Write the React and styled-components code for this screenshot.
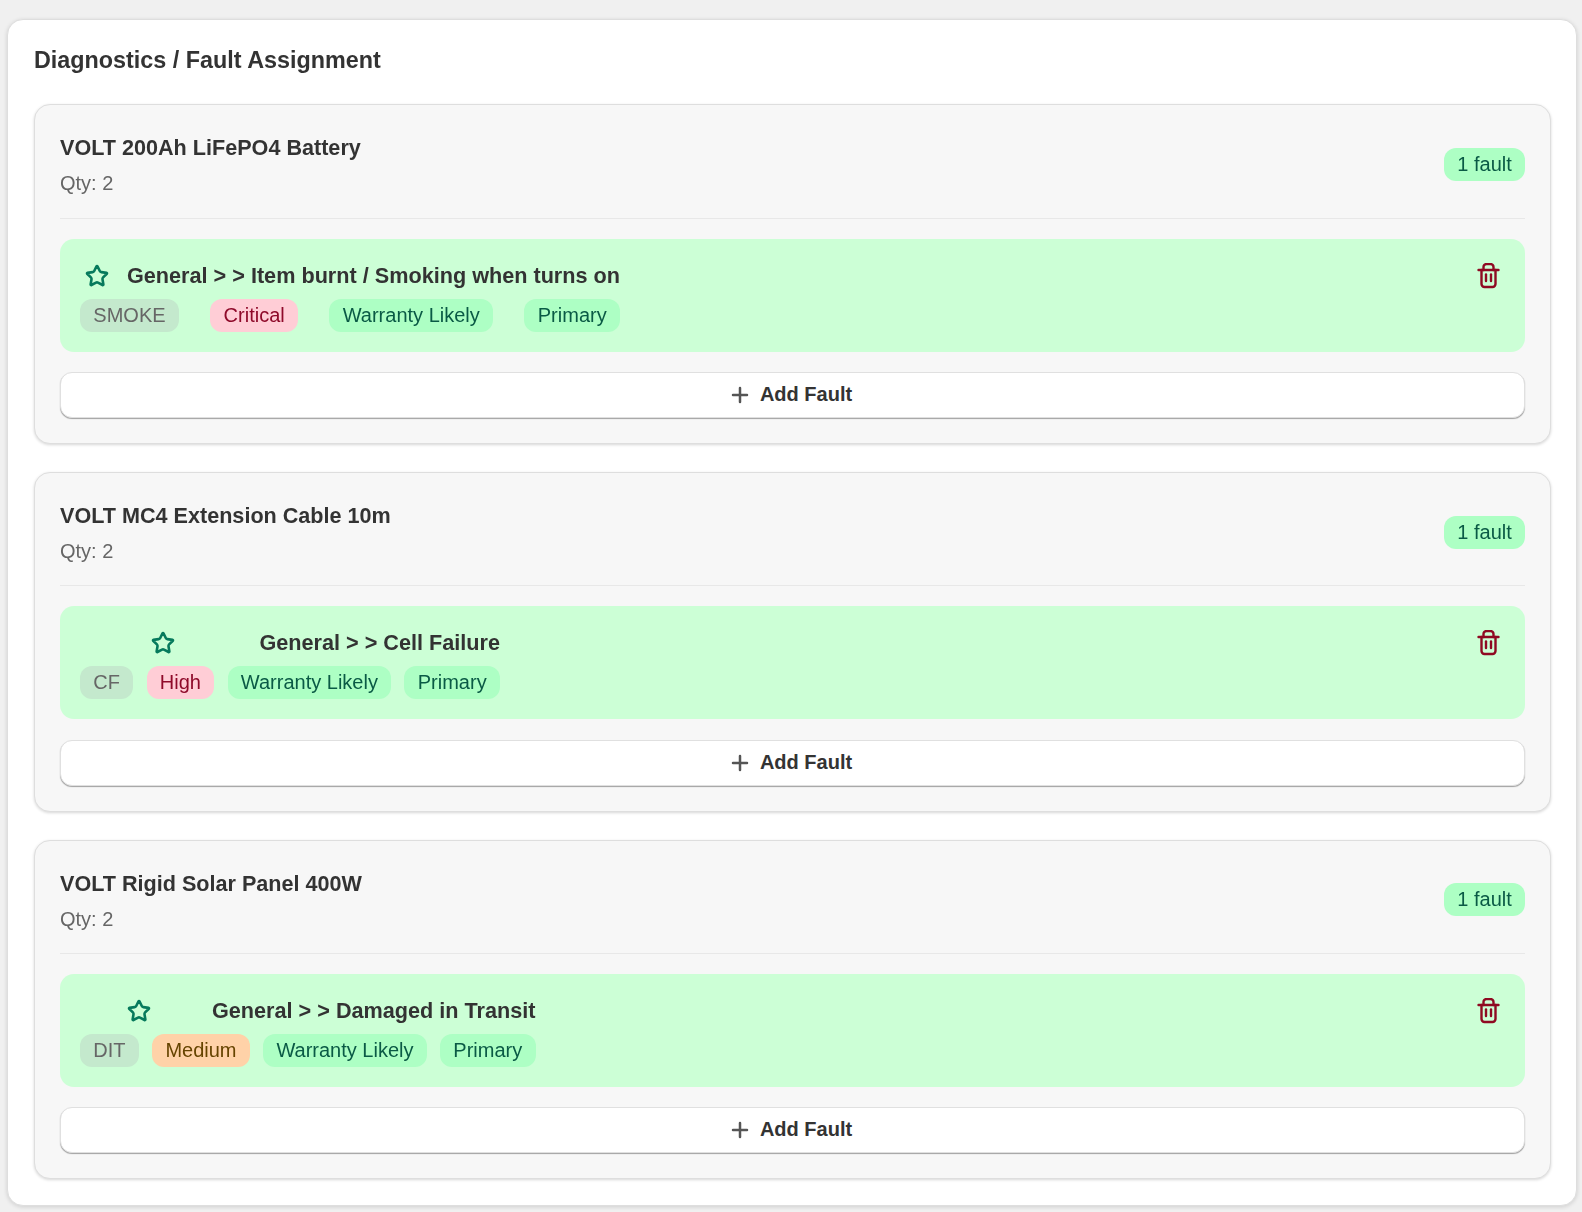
import React from "react";
import styled, { createGlobalStyle } from "styled-components";
import { Star, Plus } from "lucide-react";

const Global = createGlobalStyle`
  html, body { margin: 0; padding: 0; background: #f0f0f0; }
  body { font-family: "Liberation Sans", Arial, sans-serif; color: #333; }
  * { box-sizing: border-box; }
`;

const Page = styled.div`
  padding: 19px 5px 6px 7px;
`;

const Panel = styled.section`
  background: #fff;
  border: 1px solid #dedede;
  border-radius: 16px;
  padding: 26px 25px 26px 26px;
  box-shadow: 0 1px 4px rgba(0, 0, 0, 0.14);
`;

const Heading = styled.h2`
  margin: 0 0 28.8px;
  font-size: 23.35px;
  line-height: 29px;
  font-weight: 700;
  color: #333;
  will-change: transform;
`;

const ItemList = styled.div`
  display: flex;
  flex-direction: column;
  gap: 28px;
`;

const ItemCard = styled.article`
  background: #f7f7f7;
  border: 1px solid #dedede;
  border-radius: 16px;
  padding: 25px;
  box-shadow: 0 1px 3px rgba(0, 0, 0, 0.16);
`;

const ItemHeader = styled.header`
  display: flex;
  justify-content: space-between;
  align-items: center;
  padding-bottom: 20px;
  border-bottom: 1px solid #e8e8e8;
  margin-bottom: 20px;
`;

const HeaderSide = styled.div`
  will-change: transform;
`;

const CountSide = styled(HeaderSide)`
  margin-top: 1px;
`;

const ItemName = styled.div`
  font-size: 21.6px;
  line-height: 32.4px;
  font-weight: 700;
  padding-top: 1.6px;
  margin-bottom: 3.75px;
`;

const ItemQty = styled.div`
  font-size: 20px;
  line-height: 30px;
  color: #666;
`;

const Pill = styled.span`
  display: inline-block;
  height: 33px;
  padding: 0 13.33px;
  font-size: 20px;
  line-height: 32px;
  border-radius: 12px;
  white-space: nowrap;
  background: ${(p) => p.$bg};
  color: ${(p) => p.$fg};
`;

const FaultBox = styled.div`
  display: flex;
  justify-content: space-between;
  align-items: flex-start;
  background: #ccffd6;
  border-radius: 14px;
  padding: 20px;
  margin-bottom: 20px;
  will-change: transform;
`;

const FaultBody = styled.div`
  display: inline-flex;
  flex-direction: column;
  gap: 6.1px;
`;

const FaultHead = styled.div`
  display: flex;
  align-items: center;
  height: 34px;
`;

const StarCell = styled.span`
  flex: 1 0 34px;
  margin-right: 13px;
  display: flex;
  justify-content: center;
  color: #067a5c;
`;

const FaultTitle = styled.div`
  font-size: 21.65px;
  line-height: 34px;
  font-weight: 700;
  white-space: nowrap;
`;

const TagRow = styled.div`
  display: flex;
  justify-content: space-between;
  gap: 13.2px;
`;

const TrashButton = styled.button`
  width: 34px;
  height: 34px;
  padding: 0;
  border: 0;
  background: none;
  color: #8f0a22;
  display: flex;
  align-items: center;
  justify-content: center;
`;

const AddButton = styled.button`
  width: 100%;
  height: 46.05px;
  display: flex;
  align-items: center;
  justify-content: center;
  gap: 8px;
  padding: 0 5px 1px 0;
  background: #fff;
  border: 1px solid #e0e0e0;
  border-radius: 12px;
  box-shadow: 0 1px 1px rgba(0, 0, 0, 0.35);
  font-family: inherit;
  font-size: 20px;
  font-weight: 700;
  color: #333;
  svg { color: #555; margin-top: 1px; }
`;

const TrashIcon = () => (
  <svg width="23" height="26" viewBox="0 0 23 26" fill="none" stroke="currentColor" strokeWidth="2.4" strokeLinecap="round" strokeLinejoin="round">
    <path d="M1.5 7H21.5" />
    <path d="M6.5 7V4a3 3 0 0 1 3-3h4a3 3 0 0 1 3 3v3" />
    <path d="M4.5 7V21a3 3 0 0 0 3 3h8a3 3 0 0 0 3-3V7" />
    <path d="M9 11.5V18" />
    <path d="M14 11.5V18" />
  </svg>
);

const tones = {
  code: ["#c4e9cd", "#666"],
  critical: ["#ffcdd6", "#8f0a2a"],
  medium: ["#ffd2a8", "#664400"],
  good: ["#adffc4", "#0a5a45"],
};

const items = [
  { name: "VOLT 200Ah LiFePO4 Battery", fault: "General > > Item burnt / Smoking when turns on", code: "SMOKE", level: "Critical", tone: "critical" },
  { name: "VOLT MC4 Extension Cable 10m", fault: "General > > Cell Failure", code: "CF", level: "High", tone: "critical" },
  { name: "VOLT Rigid Solar Panel 400W", fault: "General > > Damaged in Transit", code: "DIT", level: "Medium", tone: "medium" },
];

const Tag = ({ tone, children }) => (
  <Pill $bg={tones[tone][0]} $fg={tones[tone][1]}>{children}</Pill>
);

export default function App() {
  return (
    <Page>
      <Global />
      <Panel>
        <Heading>Diagnostics / Fault Assignment</Heading>
        <ItemList>
          {items.map((item) => (
            <ItemCard key={item.name}>
              <ItemHeader>
                <HeaderSide>
                  <ItemName>{item.name}</ItemName>
                  <ItemQty>Qty: 2</ItemQty>
                </HeaderSide>
                <CountSide>
                  <Tag tone="good">1 fault</Tag>
                </CountSide>
              </ItemHeader>
              <FaultBox>
                <FaultBody>
                  <FaultHead>
                    <StarCell><Star size={24} strokeWidth={2.6} /></StarCell>
                    <FaultTitle>{item.fault}</FaultTitle>
                  </FaultHead>
                  <TagRow>
                    <Tag tone="code">{item.code}</Tag>
                    <Tag tone={item.tone}>{item.level}</Tag>
                    <Tag tone="good">Warranty Likely</Tag>
                    <Tag tone="good">Primary</Tag>
                  </TagRow>
                </FaultBody>
                <TrashButton aria-label="Delete"><TrashIcon /></TrashButton>
              </FaultBox>
              <AddButton><Plus size={24} strokeWidth={2.5} />Add Fault</AddButton>
            </ItemCard>
          ))}
        </ItemList>
      </Panel>
    </Page>
  );
}
